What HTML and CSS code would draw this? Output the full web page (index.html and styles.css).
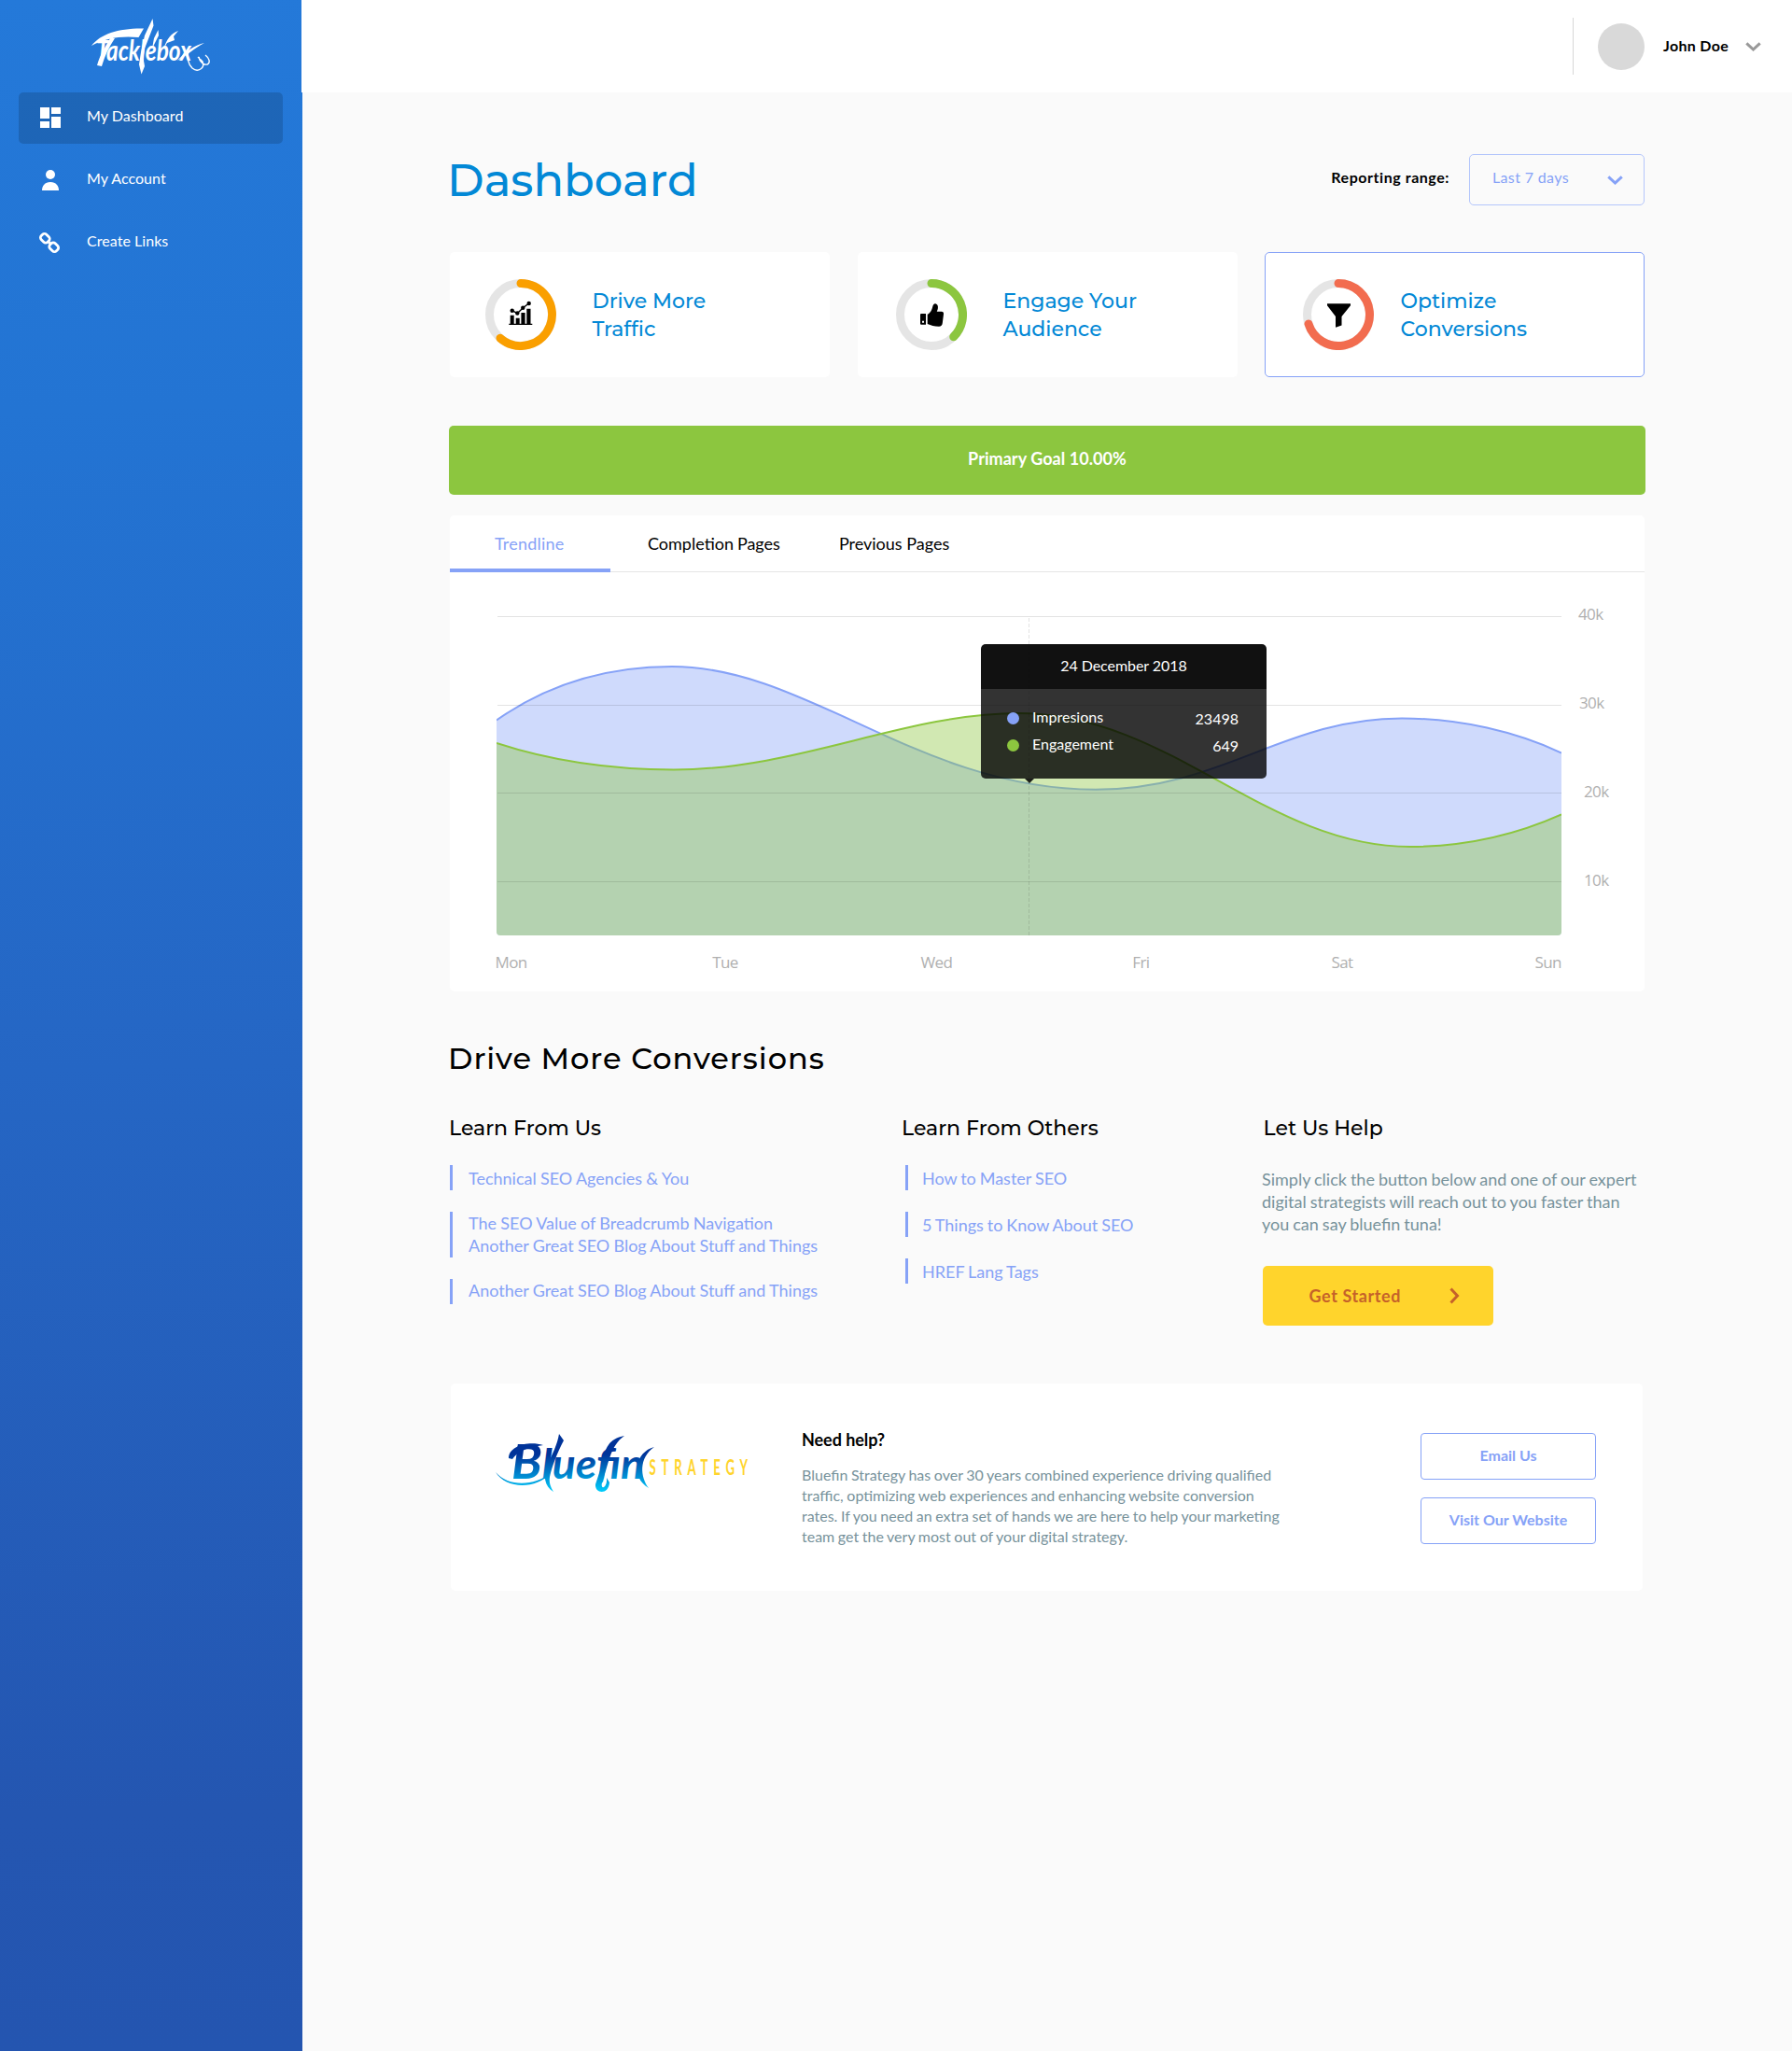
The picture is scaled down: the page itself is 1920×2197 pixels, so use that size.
FILE: index.html
```html
<!DOCTYPE html>
<html lang="en">
<head>
<meta charset="utf-8">
<title>Tacklebox Dashboard</title>
<link rel="stylesheet" href="styles.css">
</head>
<body>
<div class="app">
  <aside class="sidebar">
    <div class="brand">
      <svg class="brand-logo" width="150" height="64" viewBox="97 18 150 64" role="img" aria-label="Tacklebox">
        <text class="brand-word" x="103" y="64.500" textLength="102" lengthAdjust="spacingAndGlyphs">Tacklebox</text>
        <path d="M98 49C108 36 128 30 154 30.500L148.500 40C130 38 112 41 98 49Z" fill="#fff"/>
        <path d="M163.500 20L164.500 27.500L155 52L153.500 62L155 71L151.500 79.500L149 69L151 56L155 38Z" fill="#fff"/>
        <path d="M118 41C113 50 107 59 104 70L109 71C112 60 117 50 123 41Z" fill="#fff"/>
        <path d="M191 33C183 36 179 41 175 53L179 46L187 43L186 39Z" fill="#fff"/>
        <path d="M169.500 32L170 38L163 52L165 41Z" fill="#fff"/>
        <path d="M219 46C209 48 199 55 190 65C199 60 208 52 219 46Z" fill="#fff"/>
        <path d="M203 54C199 61 202 69 206 73C212 78 220 73 217 66L212 61M213 61C214 66 218 70 222 69C226 67 224 62 220 59" fill="none" stroke="#fff" stroke-width="1.400"/>
      </svg>
    </div>
    <nav class="nav">
      <a class="nav-item nav-item-active">
        <svg width="24" height="24" viewBox="0 0 24 24"><path d="M1 1h10v12H1zM13 1h10v7H13zM1 16h10v7H1zM13 11h10v12H13z" fill="#fff"/></svg>
        <span>My Dashboard</span>
      </a>
      <a class="nav-item">
        <svg width="24" height="24" viewBox="0 0 24 24"><circle cx="12" cy="6" r="5" fill="#fff"/><path d="M3 23c0-5 3-9 9-9s9 4 9 9z" fill="#fff"/></svg>
        <span>My Account</span>
      </a>
      <a class="nav-item">
        <svg width="24" height="24" viewBox="0 0 24 24" fill="none" stroke="#fff" stroke-width="2.800"><rect x="-4.800" y="-3.900" width="9.600" height="7.800" rx="3" transform="translate(6.300 7.200) rotate(45)"/><rect x="-4.800" y="-3.900" width="9.600" height="7.800" rx="3" transform="translate(15.700 16.800) rotate(45)"/><path d="M9 10l4 4"/></svg>
        <span>Create Links</span>
      </a>
    </nav>
  </aside>

  <div class="page">
    <header class="topbar">
      <div class="user">
        <span class="avatar"></span>
        <span class="user-name">John Doe</span>
        <svg width="17" height="10" viewBox="0 0 17 10"><path d="M1.300 1.300L8.500 8L15.700 1.300" fill="none" stroke="#999" stroke-width="3"/></svg>
      </div>
    </header>

    <main class="content">
      <section class="title-row">
        <h1>Dashboard</h1>
        <div class="range">
          <span class="range-label">Reporting range:</span>
          <div class="select">
            <span>Last 7 days</span>
            <svg width="17" height="10" viewBox="0 0 17 10"><path d="M1.300 1.300L8.500 8L15.700 1.300" fill="none" stroke="#86a2f7" stroke-width="3"/></svg>
          </div>
        </div>
      </section>

      <section class="cards">
        <article class="card card-traffic">
          <svg class="ring" width="76" height="76" viewBox="0 0 76 76">
            <circle cx="38" cy="38" r="33.500" class="ring-track"/>
            <path d="M38 4.500A33.500 33.500 0 1 1 16 63.300" class="ring-value ring-orange"/>
            <path d="M25.300 47.700h25v1.400h-25zM26.700 38.700h4v9.500h-4zM32.700 41.700h4v6.500h-4zM38.400 36h4.200v12h-4.200zM44.300 31.700h4.200v16.500h-4.200z"/>
            <path d="M28.700 33.700L34.300 36.700L40.300 30.700L46.700 26" fill="none" stroke="#000" stroke-width="1.500"/>
            <circle cx="28.700" cy="33.700" r="2.200"/><circle cx="34.300" cy="36.500" r="2.200"/><circle cx="40.300" cy="30.700" r="2.200"/><circle cx="46.700" cy="26" r="2.200"/>
          </svg>
          <h2>Drive More<br>Traffic</h2>
        </article>
        <article class="card card-engage">
          <svg class="ring" width="76" height="76" viewBox="0 0 76 76">
            <circle cx="38" cy="38" r="33.500" class="ring-track"/>
            <path d="M38 4.500A33.500 33.500 0 0 1 61.700 61.700" class="ring-value ring-green"/>
            <path fill-rule="evenodd" d="M27 37h5v11.700h-5a1 1 0 0 1-1-1v-9.700a1 1 0 0 1 1-1zM28 44.800v1.900h2v-1.900z"/>
            <path d="M33.700 37.800C37 36.500 38.600 32.500 39.300 29.300C39.800 26.600 41.200 26 42.300 26.200C44.600 26.700 45.200 29 44.900 31C44.700 32.800 44 34 43.800 34.700H48.800C50.500 34.700 51.300 36 51 37.600L49.800 47C49.500 49.600 48.200 50.700 46 50.700C41 50.700 37.500 49.500 33.700 47.900Z"/>
          </svg>
          <h2>Engage Your<br>Audience</h2>
        </article>
        <article class="card card-optimize">
          <svg class="ring" width="76" height="76" viewBox="0 0 76 76">
            <circle cx="38" cy="38" r="33.500" class="ring-track"/>
            <path d="M38 4.500A33.500 33.500 0 1 1 6 48" class="ring-value ring-coral"/>
            <path d="M26 26.200H51V28.200L41.500 40V49.500L35 51.800V40L26 28.200Z"/>
          </svg>
          <h2>Optimize<br>Conversions</h2>
        </article>
      </section>

      <div class="goal">Primary Goal 10.00%</div>

      <section class="panel">
        <div class="tabs">
          <a class="tab tab-active">Trendline</a>
          <a class="tab tab-completion">Completion Pages</a>
          <a class="tab tab-previous">Previous Pages</a>
        </div>
        <div class="chart-row">
          <div class="chart">
            <svg class="plot" width="1141" height="342" viewBox="532 660 1141 342">
              <clipPath id="area"><path d="M532 640H1673V998a4 4 0 0 1-4 4H536a4 4 0 0 1-4-4Z"/></clipPath>
              <g clip-path="url(#area)">
                <path d="M532 771.500C588 732 650 714 720 714C865 714 985 845.700 1174 845.700C1310 845.700 1375 769.500 1502 769.500C1565 769.500 1625 784 1673 806.500V1002H532Z" fill="#86a2f7" fill-opacity=".4"/>
                <path d="M532 771.500C588 732 650 714 720 714C865 714 985 845.700 1174 845.700C1310 845.700 1375 769.500 1502 769.500C1565 769.500 1625 784 1673 806.500" fill="none" stroke="#86a2f7" stroke-width="2"/>
                <path d="M532 796C590 815 650 824.500 722 824.500C855 824.500 970 764 1091 764C1255 764 1355 907 1511 907C1570 907 1625 894 1673 872.500V1002H532Z" fill="#8cc63f" fill-opacity=".4"/>
                <path d="M532 796C590 815 650 824.500 722 824.500C855 824.500 970 764 1091 764C1255 764 1355 907 1511 907C1570 907 1625 894 1673 872.500" fill="none" stroke="#8cc63f" stroke-width="2"/>
              </g>
              <path d="M533 660.500H1673M533 755.500H1673M533 849.500H1673M533 944.500H1673" stroke="#000" stroke-opacity=".11"/>
              <path d="M1102.500 662V1002" stroke="#000" stroke-opacity=".11" stroke-dasharray="4 2"/>
            </svg>
            <div class="tooltip">
              <div class="tooltip-date">24 December 2018</div>
              <div class="tooltip-body">
                <div class="tooltip-line"><i class="dot dot-blue"></i><span>Impresions</span><b>23498</b></div>
                <div class="tooltip-line"><i class="dot dot-green"></i><span>Engagement</span><b>649</b></div>
              </div>
            </div>
            <div class="x-axis"><span>Mon</span><span>Tue</span><span>Wed</span><span>Fri</span><span>Sat</span><span>Sun</span></div>
          </div>
          <div class="y-axis"><span>40k</span><span>30k</span><span>20k</span><span>10k</span></div>
        </div>
      </section>

      <section class="learn">
        <h2 class="learn-title">Drive More Conversions</h2>
        <div class="learn-cols">
          <div class="col-us">
            <h3>Learn From Us</h3>
            <ul>
              <li>Technical SEO Agencies &amp; You</li>
              <li class="double">The SEO Value of Breadcrumb Navigation<br>Another Great SEO Blog About Stuff and Things</li>
              <li>Another Great SEO Blog About Stuff and Things</li>
            </ul>
          </div>
          <div class="col-others">
            <h3>Learn From Others</h3>
            <ul>
              <li>How to Master SEO</li>
              <li>5 Things to Know About SEO</li>
              <li>HREF Lang Tags</li>
            </ul>
          </div>
          <div class="col-help">
            <h3>Let Us Help</h3>
            <p>Simply click the button below and one of our expert<br>digital strategists will reach out to you faster than<br>you can say bluefin tuna!</p>
            <a class="cta"><span>Get Started</span><svg width="11" height="18" viewBox="0 0 11 18"><path d="M1.500 1.500L8.500 9L1.500 16.500" fill="none" stroke="#c5622a" stroke-width="3"/></svg></a>
          </div>
        </div>
      </section>

      <section class="help">
        <svg class="bluefin" width="272" height="68" viewBox="530 1534 272 68" role="img" aria-label="Bluefin Strategy">
          <defs><linearGradient id="sea" gradientUnits="userSpaceOnUse" x1="0" y1="1536" x2="0" y2="1599"><stop offset=".35" stop-color="#039"/><stop offset="1" stop-color="#00d2ff"/></linearGradient></defs>
          <g fill="url(#sea)">
            <text class="bluefin-word" x="548" y="1584" textLength="142" lengthAdjust="spacingAndGlyphs"><tspan class="bluefin-cap">B</tspan>luefin</text>
            <path d="M531 1577C545 1593 572 1592 590 1578C574 1596 542 1595 531 1577Z"/>
            <path d="M545 1562C545 1549 566 1543 582 1548C566 1550 554 1555 549 1563Z"/>
            <path d="M599 1536L604 1543C597 1556 591 1572 589 1582C588 1588 590 1593 593 1598C583 1592 582 1580 586 1570C592 1557 597 1548 599 1536Z"/>
            <path d="M669 1538C652 1541 648 1552 646 1566L638 1590C637 1600 652 1602 653 1588L650 1583C651 1594 643 1597 645 1588C652 1570 653 1549 669 1538Z"/>
            <path d="M701 1550C681 1555 675 1582 695 1594C686 1582 684 1562 701 1550Z"/>
          </g>
          <text class="strategy-word" transform="translate(695.500 1579.700) scale(.6 1)" textLength="176">STRATEGY</text>
        </svg>
        <div class="help-text">
          <h4>Need help?</h4>
          <p>Bluefin Strategy has over 30 years combined experience driving qualified<br>traffic, optimizing web experiences and enhancing website conversion<br>rates. If you need an extra set of hands we are here to help your marketing<br>team get the very most out of your digital strategy.</p>
        </div>
        <div class="help-actions">
          <a class="outline-btn">Email Us</a>
          <a class="outline-btn">Visit Our Website</a>
        </div>
      </section>
    </main>
  </div>
</div>
</body>
</html>
```
FILE: styles.css
```css
* { box-sizing: border-box; }
body { margin: 0; background: #fafafa; color: #000; font-family: Lato, sans-serif; font-size: 16px; }
h1, h2, h3, h4, p, ul { margin: 0; padding: 0; font-weight: 400; }
ul { list-style: none; }
svg { display: block; flex: none; }

.app { display: flex; min-height: 2197px; }
.sidebar { width: 324px; flex: none; background: linear-gradient(178deg, #2479d9 0%, #2374d3 20%, #2566c4 52%, #2456b1 88%, #2455b0 100%); }
.brand { height: 99px; padding: 18px 0 0 97px; }
.brand-word { font: italic 700 30px Lato, sans-serif; fill: #fff; }
.nav { display: flex; flex-direction: column; gap: 12px; padding: 0 21px 0 20px; }
.nav-item { display: flex; align-items: center; height: 55px; padding-left: 22px; gap: 27px; border-radius: 5px; color: #fff; }
.nav-item svg { margin-bottom: 1px; }
.nav-item span { letter-spacing: .05px; padding-bottom: 6px; }
.nav-item-active { background: rgba(0, 0, 0, .15); }

.page { flex: 1; min-width: 0; }
.topbar { display: flex; justify-content: flex-end; align-items: center; height: 99px; margin-left: -1px; background: #fff; padding-right: 33px; }
.user { display: flex; align-items: center; height: 61px; border-left: 1px solid #d8d8d8; padding-left: 26px; }
.avatar { width: 50px; height: 50px; border-radius: 50%; background: #d9d9d9; }
.user-name { font-weight: 700; margin: 0 18px 0 20px; letter-spacing: .3px; padding-bottom: 2px; }

.content { margin-left: 157px; width: 1282px; padding-top: 66px; }
.title-row { display: flex; justify-content: space-between; padding-right: 1px; height: 55px; }
h1, .card h2, .learn-title, h3 { font-family: Montserrat, Inter, sans-serif; font-weight: 500; }
h1 { font-size: 48px; line-height: 57px; margin-left: -2px; color: #0288d6; }
.range { display: flex; align-items: center; }
.range-label { font-weight: 700; margin-right: 21px; letter-spacing: .55px; padding-bottom: 6px; }
.select { display: flex; align-items: center; justify-content: space-between; width: 188px; height: 55px; border: 1px solid #b4c6fb; border-radius: 5px; padding: 0 22px 0 24px; color: #86a2f7; }
.select span { letter-spacing: .35px; padding-bottom: 6px; }

.cards { display: flex; gap: 29px; margin: 50px 0 0 1px; }
.card { display: flex; align-items: center; width: 407px; height: 134px; border-radius: 5px; background: #fff; }
.card h2 { font-size: 22px; line-height: 30px; padding-top: 2px; color: #0288d6; }
.card-traffic { padding-left: 38px; gap: 38.500px; }
.card-engage { padding-left: 41px; gap: 38.500px; margin-left: 1px; }
.card-optimize { padding-left: 40px; gap: 28.500px; border: 1px solid #86a2f7; }
.ring-track { fill: none; stroke: #e5e5e5; stroke-width: 9; }
.ring-value { fill: none; stroke-width: 9; stroke-linecap: round; }
.ring-orange { stroke: #fa9f00; }
.ring-green { stroke: #8cc63f; }
.ring-coral { stroke: #f26c4f; }

.goal { height: 74px; margin-top: 52px; border-radius: 5px; background: #8cc63f; color: #fff; font-weight: 700; font-size: 18px; letter-spacing: .06px; line-height: 70px; text-align: center; }

.panel { width: 1280px; height: 510px; margin: 22px 0 0 1px; border-radius: 5px; background: #fff; }
.tabs { display: flex; height: 61px; border-bottom: 1px solid #e5e5e5; font-size: 18px; line-height: 61px; }
.tab { height: 61px; }
.tab-active { width: 172px; padding-left: 48px; letter-spacing: .2px; color: #86a2f7; border-bottom: 4px solid #86a2f7; }
.tab-completion { margin-left: 40px; word-spacing: -.7px; }
.tab-previous { margin-left: 63px; }
.chart-row { display: flex; padding: 47px 0 0 50px; }
.chart { position: relative; width: 1141px; }
.x-axis, .y-axis { font-family: "Open Sans", sans-serif; font-size: 17px; font-weight: 500; line-height: 24px; letter-spacing: -.6px; color: #b0b0b0; }
.x-axis { display: flex; margin: 17px 0 0 -1.500px; }
.x-axis span + span { margin-left: 195px; }
.x-axis span:nth-child(2) { margin-left: 198.500px; }
.x-axis span:nth-child(3) { margin-left: 195.700px; }
.x-axis span:nth-child(4) { margin-left: 193px; }
.y-axis { display: flex; flex-direction: column; gap: 71px; margin: -14px 0 0 18px; }
.y-axis span:nth-child(n+2) { padding-left: 1px; }
.y-axis span:nth-child(n+3) { padding-left: 6px; }
.tooltip { position: absolute; left: 519px; top: 30px; width: 306px; height: 144px; color: #fff; }
.tooltip::after { content: ""; position: absolute; left: 47px; top: 144px; border: 5px solid transparent; border-top-color: #1c1e1a; border-bottom: 0; }
.tooltip-date { height: 48px; line-height: 46px; text-align: center; letter-spacing: -.05px; background: rgba(0, 0, 0, .935); border-radius: 5px 5px 0 0; }
.tooltip-body { height: 96px; padding: 17px 30px 0 28px; background: rgba(0, 0, 0, .8); border-radius: 0 0 5px 5px; }
.tooltip-line { display: flex; align-items: center; height: 29px; }
.tooltip-line span { flex: 1; padding-bottom: 4px; }
.tooltip-line b { font-weight: 400; }
.dot { width: 13px; height: 13px; border-radius: 50%; margin-right: 14px; }
.dot-blue { background: #86a2f7; }
.dot-green { background: #8cc63f; }

.learn-title { font-size: 32px; letter-spacing: .95px; line-height: 40px; margin: 52px 0 0 -1px; }
.learn-cols { display: flex; margin-top: 40px; }
.learn-cols h3 { font-size: 22px; line-height: 30px; white-space: nowrap; }
.col-us { width: 485px; }
.col-others { width: 386px; }
.col-others ul { word-spacing: -.7px; }
.col-us ul { word-spacing: -.35px; }
.learn ul { display: flex; flex-direction: column; gap: 23px; margin: 24px 0 0 1px; }
.learn li { height: 27px; border-left: 3px solid #86a2f7; padding-left: 17px; font-size: 18px; line-height: 29px; color: #86a2f7; white-space: nowrap; }
.learn li.double { height: 49px; line-height: 24px; }
.learn .col-us li:last-child { line-height: 25px; }
.learn .col-others ul { margin-left: 4px; }
.learn .col-others li { padding-left: 15px; }
.col-help h3 { padding-left: 1.500px; }
.col-help p { margin-top: 27px; font-size: 18px; line-height: 24px; word-spacing: -.6px; color: #77929b; white-space: nowrap; }
.cta { display: flex; align-items: center; justify-content: space-between; width: 247px; height: 64px; margin: 33px 0 0 1px; padding: 0 36px 0 49.500px; border-radius: 5px; background: #ffd42c; color: #c5622a; font-size: 18px; font-weight: 700; letter-spacing: .6px; }

.help { display: flex; width: 1277px; height: 222px; margin: 62px 0 0 2px; padding: 52px 50px 0 47px; border-radius: 5px; background: #fff; }
.bluefin-word { font: italic 700 44px Lato, sans-serif; }
.bluefin-cap { font-size: 51px; }
.strategy-word { font: 700 22px Lato, sans-serif; fill: #ffd42c; }
.help-text { margin: -3px 0 0 57px; width: 663px; }
.help-text h4 { font-size: 18px; font-weight: 700; line-height: 22px; letter-spacing: -.05px; }
.help-text p { margin-top: 16px; line-height: 22px; word-spacing: -.5px; color: #77929b; white-space: nowrap; }
.help-actions { display: flex; flex-direction: column; gap: 19px; width: 188px; padding-top: 1px; }
.outline-btn { height: 50px; border: 1px solid #86a2f7; border-radius: 4px; color: #86a2f7; font-weight: 700; line-height: 46px; text-align: center; }
```
